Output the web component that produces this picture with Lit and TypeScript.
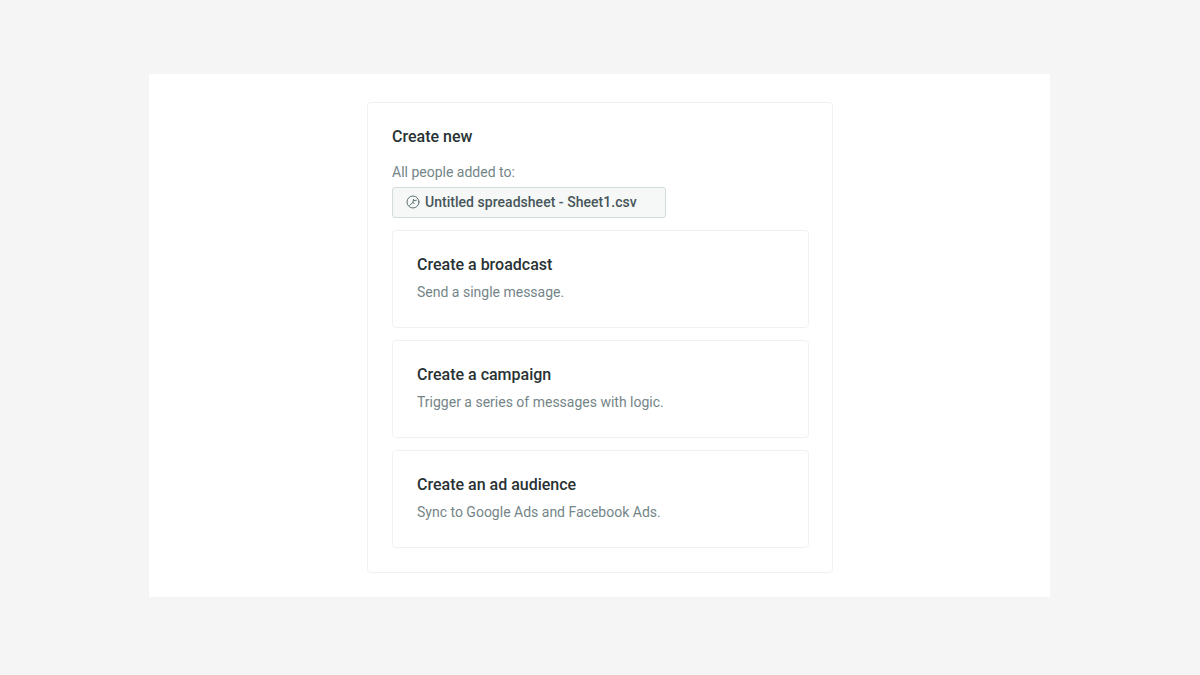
import { LitElement, html, css } from "lit";
import { customElement } from "lit/decorators.js";

const ITEMS = [
  ["Create a broadcast", "Send a single message."],
  ["Create a campaign", "Trigger a series of messages with logic."],
  ["Create an ad audience", "Sync to Google Ads and Facebook Ads."],
];

@customElement("app-root")
export class AppRoot extends LitElement {
  static styles = css`
    :host {
      display: block;
      height: 675px;
      background: #f5f5f5;
      font-family: Roboto, "Liberation Sans", sans-serif;
      padding-top: 74px;
      box-sizing: border-box;
    }
    .panel {
      width: 901px;
      height: 523px;
      margin-left: 149px;
      background: #fff;
      padding: 28px 0 0 218px;
      box-sizing: border-box;
    }
    .card {
      width: 466px;
      height: 471px;
      box-sizing: border-box;
      border: 1px solid #f0f2f2;
      border-radius: 4px;
      padding: 24px;
      display: flex;
      flex-direction: column;
    }
    h2 {
      margin: 0;
      font-size: 16px;
      line-height: 20px;
      font-weight: 500;
      color: #283234;
    }
    .label {
      margin-top: 15px;
      font-size: 14px;
      line-height: 20px;
      color: #748588;
    }
    .tag {
      margin-top: 5px;
      width: 274px;
      height: 31px;
      box-sizing: border-box;
      border: 1px solid #d3dddd;
      border-radius: 3px;
      background: #f6f8f8;
      display: flex;
      align-items: center;
      gap: 5px;
      padding: 0 0 1px 13px;
      font-size: 14px;
      font-weight: 500;
      letter-spacing: 0.03px;
      color: #46565a;
    }
    .tag svg {
      flex: none;
      display: block;
    }
    .list {
      margin-top: 12px;
      display: flex;
      flex-direction: column;
      gap: 12px;
    }
    .item {
      width: 417px;
      height: 98px;
      box-sizing: border-box;
      border: 1px solid #f0f2f2;
      border-radius: 4px;
      padding: 24px;
    }
    .item h3 {
      margin: 0;
      font-size: 16px;
      line-height: 20px;
      font-weight: 500;
      color: #283234;
    }
    .item p {
      margin: 7px 0 0;
      font-size: 14px;
      line-height: 20px;
      color: #748588;
    }
  `;

  render() {
    return html`
      <div class="panel">
        <div class="card">
          <h2>Create new</h2>
          <div class="label">All people added to:</div>
          <div class="tag">
            <svg width="14" height="14" viewBox="0 0 14 14" fill="none" stroke="#5f7074" stroke-width="1" stroke-linecap="round" stroke-linejoin="round">
              <circle cx="7" cy="7" r="6" />
              <path d="M3.7 10.3 L6.8 7.6 L8.2 8.4" />
              <path d="M6.8 7.6 L7.6 4.4" />
              <path d="M7.6 5.8 L10.4 5.2" />
            </svg>
            <span>Untitled spreadsheet - Sheet1.csv</span>
          </div>
          <div class="list">
            ${ITEMS.map(
              ([t, d]) => html`<div class="item"><h3>${t}</h3><p>${d}</p></div>`
            )}
          </div>
        </div>
      </div>
    `;
  }
}
